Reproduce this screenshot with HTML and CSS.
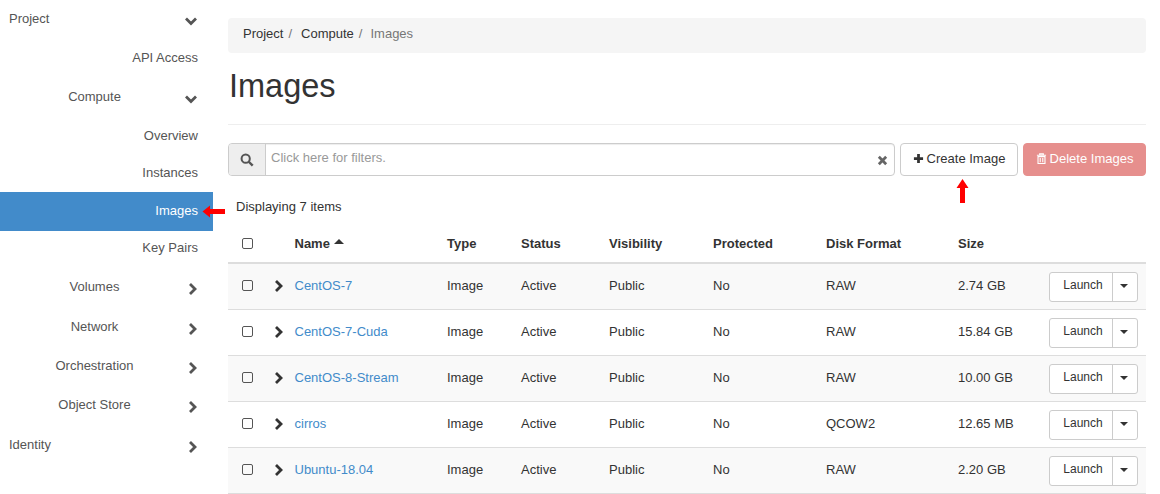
FILE: index.html
```html
<!DOCTYPE html>
<html lang="en">
<head>
    <meta charset="UTF-8">
    <title>Images</title>
    <link rel="stylesheet" href="styles.css">
</head>
<body>
    <svg class="defs" width="0" height="0">
        <symbol id="chev-down" viewBox="0 0 14 14"><path d="M2 4.5 L7 9.5 L12 4.5" fill="none" stroke="currentColor" stroke-width="2.8"/></symbol>
        <symbol id="chev-right" viewBox="0 0 14 14"><path d="M6 2 L11 7 L6 12" fill="none" stroke="currentColor" stroke-width="2.8"/></symbol>
    </svg>

    <nav class="sidebar">
        <div class="nav_row top">Project<svg class="chev"><use href="#chev-down"/></svg></div>
        <div class="nav_row leaf">API Access</div>
        <div class="nav_row group"><span>Compute</span><svg class="chev"><use href="#chev-down"/></svg></div>
        <div class="nav_row leaf">Overview</div>
        <div class="nav_row leaf instances">Instances</div>
        <div class="nav_row leaf active">Images
            <svg class="arrow_left" viewBox="0 0 23 13"><path d="M0.5 6.5 L8 0.5 V4 H23 V9 H8 V12.5 Z" fill="#f00"/></svg>
        </div>
        <div class="nav_row leaf keypairs">Key Pairs</div>
        <div class="nav_row group tall"><span>Volumes</span><svg class="chev"><use href="#chev-right"/></svg></div>
        <div class="nav_row group"><span>Network</span><svg class="chev"><use href="#chev-right"/></svg></div>
        <div class="nav_row group"><span>Orchestration</span><svg class="chev"><use href="#chev-right"/></svg></div>
        <div class="nav_row group tall"><span>Object Store</span><svg class="chev"><use href="#chev-right"/></svg></div>
        <div class="nav_row top">Identity<svg class="chev"><use href="#chev-right"/></svg></div>
    </nav>

    <main class="content">
        <div class="breadcrumb">
            <span>Project</span><i>/</i><span>Compute</span><i>/</i><span class="current">Images</span>
        </div>
        <h1>Images</h1>
        <hr>
        <div class="toolbar">
            <div class="search">
                <div class="search_addon">
                    <svg viewBox="0 0 16 16" width="14" height="14"><circle cx="6.5" cy="6.5" r="4.7" fill="none" stroke="#555" stroke-width="2.3"/><path d="M10 10 L14.5 14.5" stroke="#555" stroke-width="2.8"/></svg>
                </div>
                <div class="search_input">
                    <span>Click here for filters.</span>
                    <svg viewBox="0 0 12 12" width="11" height="11"><path d="M2 2 L10 10 M10 2 L2 10" stroke="#666" stroke-width="3"/></svg>
                </div>
            </div>
            <div class="create_wrap">
                <button class="btn create">
                    <svg viewBox="0 0 12 12" width="11" height="11"><path d="M6 1 V11 M1 6 H11" stroke="#333" stroke-width="3"/></svg>
                    Create Image
                </button>
                <svg class="arrow_up" viewBox="0 0 13 24"><path d="M6.5 0 L12.5 9 H9 V24 H4 V9 H0.5 Z" fill="#f00"/></svg>
            </div>
            <button class="btn delete">
                <svg viewBox="0 0 12 12" width="11" height="11"><path d="M1 2.5 H11 M4 2.5 V1 H8 V2.5 M2.2 4 H9.8 V11.5 H2.2 Z M4.6 5.5 V10 M7.4 5.5 V10" fill="none" stroke="#fff" stroke-width="1.2"/></svg>
                Delete Images
            </button>
        </div>
        <p class="count">Displaying 7 items</p>

        <table>
            <thead>
                <tr>
                    <th class="c_check"><span class="check"></span></th>
                    <th class="c_expand"></th>
                    <th class="c_name">Name <b class="sort"></b></th>
                    <th class="c_type">Type</th>
                    <th class="c_status">Status</th>
                    <th class="c_vis">Visibility</th>
                    <th class="c_prot">Protected</th>
                    <th class="c_disk">Disk Format</th>
                    <th class="c_size">Size</th>
                    <th></th>
                </tr>
            </thead>
            <tbody id="rows"></tbody>
        </table>
    </main>
    <script src="script.js"></script>
</body>
</html>
```

FILE: styles.css
```css
* {
  margin: 0;
  padding: 0;
  box-sizing: border-box;
}

html, body {
  height: 494px;
  overflow: hidden;
}

body {
  display: flex;
  background-color: #fff;
  color: #333;
  font-family: "Liberation Sans", Arial, sans-serif;
  font-size: 13px;
  line-height: 18px;
}

.defs {
  position: absolute;
}

/* sidebar */
.sidebar {
  width: 213px;
  flex: none;
  color: #555;
}

.nav_row {
  height: 39px;
  display: flex;
  align-items: center;
  padding: 0 15px 1px 9px;
  position: relative;
}
.nav_row.tall {
  height: 40px;
  padding-bottom: 2px;
}
.nav_row.instances {
  height: 36px;
  padding-bottom: 2px;
}
.nav_row.keypairs {
  height: 37px;
  padding-bottom: 3px;
}
.nav_row.top {
  justify-content: space-between;
}
.nav_row.group span {
  flex: 1;
  text-align: center;
  margin-right: 4px;
}
.nav_row.leaf {
  justify-content: flex-end;
}
.nav_row.active {
  background-color: #428bca;
  color: #fff;
}
.chev {
  width: 14px;
  height: 14px;
  margin-top: 3px;
  color: #555;
  flex: none;
}
.arrow_left {
  position: absolute;
  left: 202px;
  top: 13px;
  width: 23px;
  height: 13px;
}

/* main column */
.content {
  flex: 1;
  padding: 18px 14px 0 15px;
  min-width: 0;
}

.breadcrumb {
  height: 35px;
  background-color: #f5f5f5;
  border-radius: 4px;
  padding: 7px 15px;
  display: flex;
}
.breadcrumb i {
  font-style: normal;
  color: #777;
  padding: 0 9px 0 5px;
}
.breadcrumb .current {
  color: #777;
  margin-left: -1px;
}

h1 {
  font-size: 32.5px;
  font-weight: 400;
  line-height: 36px;
  margin-top: 15px;
  padding-left: 1px;
}

hr {
  border: 0;
  border-top: 1px solid #eee;
  margin-top: 20px;
}

.toolbar {
  display: flex;
  gap: 5px;
  margin-top: 18px;
}
.search {
  flex: 1;
  display: flex;
  height: 33px;
  border: 1px solid #ccc;
  border-radius: 4px;
  box-shadow: inset 0 1px 1px rgba(0,0,0,.075);
}
.search_addon {
  width: 37px;
  background-color: #eee;
  border-right: 1px solid #ccc;
  border-radius: 3px 0 0 3px;
  display: flex;
  align-items: center;
  justify-content: center;
}
.search_input {
  flex: 1;
  display: flex;
  justify-content: space-between;
  padding: 5px 6px 0 5px;
  color: #999;
}
.search_input svg {
  margin-top: 6px;
}

.btn {
  height: 33px;
  display: flex;
  align-items: center;
  justify-content: center;
  gap: 3px;
  padding-bottom: 2px;
  white-space: nowrap;
  border: 1px solid #ccc;
  border-radius: 4px;
  background-color: #fff;
  color: #333;
  font: inherit;
}
.create_wrap {
  position: relative;
}
.create {
  width: 118px;
}
.delete {
  width: 123px;
  background-color: #e68f8d;
  border-color: #e68f8d;
  color: #fff;
}
.arrow_up {
  position: absolute;
  left: 56px;
  top: 36px;
  width: 13px;
  height: 24px;
}

.count {
  margin: 22px 0 0 8px;
}

table {
  width: 100%;
  border-collapse: separate;
  border-spacing: 0;
  table-layout: fixed;
  margin-top: 8px;
}
th {
  height: 40px;
  padding-top: 2px;
  text-align: left;
  font-weight: 700;
  border-bottom: 2px solid #ddd;
}
td {
  height: 46px;
  padding-bottom: 2px;
  border-bottom: 1px solid #ddd;
}
tbody tr:nth-child(odd) {
  background-color: #f9f9f9;
}
.c_check { width: 28px; padding-left: 14px; }
.c_expand { width: 38.5px; padding-left: 14px; }
.c_name { width: 152.5px; }
.c_type { width: 74px; }
.c_status { width: 88px; }
.c_vis { width: 104px; }
.c_prot { width: 113px; }
.c_disk { width: 132px; }
.c_size { width: 91px; }

.check {
  display: block;
  width: 11px;
  height: 11px;
  border: 1px solid #555;
  border-radius: 2px;
}
th .check {
  margin-top: -2px;
}
.expand {
  display: block;
  width: 14px;
  height: 14px;
  color: #333;
}
.sort {
  display: inline-block;
  border: 5px solid transparent;
  border-top: 0;
  border-bottom: 5px solid #333;
  vertical-align: 4px;
}

a {
  color: #428bca;
  text-decoration: none;
}

.launch {
  display: flex;
  width: 89px;
  height: 30px;
  margin-top: 2px;
  border: 1px solid #ccc;
  border-radius: 3px;
  background-color: #fff;
  font-size: 12px;
}
.launch span {
  flex: 1;
  text-align: center;
  line-height: 24px;
  padding-left: 4px;
  border-right: 1px solid #ccc;
}
.launch b {
  width: 24px;
  position: relative;
}
.launch b::after {
  content: "";
  position: absolute;
  left: 7px;
  top: 11px;
  border: 4px solid transparent;
  border-bottom: 0;
  border-top: 4px solid #333;
}
```

FILE: script.js
```js
const images = [
  ["CentOS-7", "RAW", "2.74 GB"],
  ["CentOS-7-Cuda", "RAW", "15.84 GB"],
  ["CentOS-8-Stream", "RAW", "10.00 GB"],
  ["cirros", "QCOW2", "12.65 MB"],
  ["Ubuntu-18.04", "RAW", "2.20 GB"],
];

document.getElementById("rows").innerHTML = images
  .map(
    (row) => `<tr>
      <td class="c_check"><span class="check"></span></td>
      <td class="c_expand"><svg class="expand"><use href="#chev-right"/></svg></td>
      <td><a href="#">${row[0]}</a></td>
      <td>Image</td>
      <td>Active</td>
      <td>Public</td>
      <td>No</td>
      <td>${row[1]}</td>
      <td>${row[2]}</td>
      <td><div class="launch"><span>Launch</span><b></b></div></td>
    </tr>`
  )
  .join("");
```
